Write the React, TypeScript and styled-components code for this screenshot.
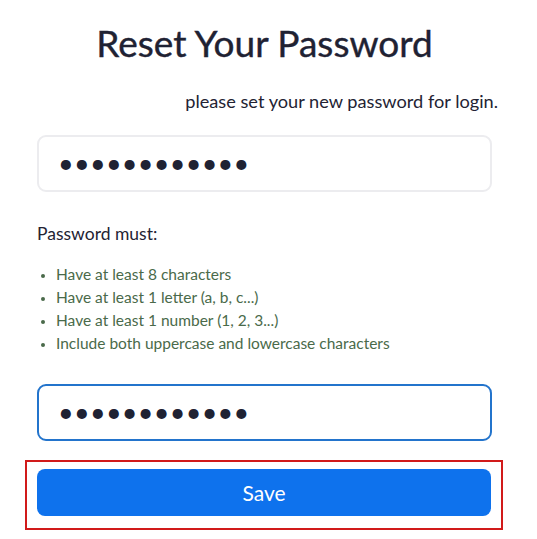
import { FC } from 'react';
import styled, { createGlobalStyle } from 'styled-components';

const GlobalStyle = createGlobalStyle`
  html, body {
    margin: 0;
    padding: 0;
    background: #fff;
  }
  body {
    font-family: Lato, "Open Sans", sans-serif;
    color: #232333;
  }
`;

const rules = [
  'Have at least 8 characters',
  'Have at least 1 letter (a, b, c...)',
  'Have at least 1 number (1, 2, 3...)',
  'Include both uppercase and lowercase characters',
];

const App: FC = () => (
  <>
    <GlobalStyle />
    <Page>
      <Title>Reset Your Password</Title>
      <Subtitle>please set your new password for login.</Subtitle>
      <PasswordInput type="password" defaultValue="newpassword1" readOnly />
      <RulesLabel>Password must:</RulesLabel>
      <RuleList>
        {rules.map((r) => (
          <Rule key={r}>{r}</Rule>
        ))}
      </RuleList>
      <PasswordInput type="password" defaultValue="newpassword1" readOnly $focused />
      <Highlight>
        <SaveButton type="button">Save</SaveButton>
      </Highlight>
    </Page>
  </>
);

export default App;

const Page = styled.main`
  width: 455px;
  margin-left: 37px;
  padding-top: 20px;
  display: flex;
  flex-direction: column;
`;

const Title = styled.h1`
  margin: 0;
  font-size: 37px;
  font-weight: 400;
  line-height: 46px;
  text-align: center;
  color: #1f2233;
  -webkit-text-stroke: 0.4px #1f2233;
`;

const Subtitle = styled.p`
  margin: 23px -6px 0 0;
  font-size: 18.2px;
  line-height: 24px;
  text-align: right;
  color: #232333;
`;

const PasswordInput = styled.input<{ $focused?: boolean }>`
  box-sizing: border-box;
  width: 100%;
  height: 57px;
  margin-top: ${(p) => (p.$focused ? '29px' : '22px')};
  padding: 0 19px 2px;
  border: ${(p) => (p.$focused ? '2px solid #2374cc' : '2px solid #ececef')};
  border-radius: 9px;
  background: #fff;
  font-family: Lato, sans-serif;
  font-size: 27px;
  letter-spacing: 0.3px;
  color: #1f2233;
  outline: none;
`;

const RulesLabel = styled.div`
  margin-top: 30px;
  font-size: 17.5px;
  line-height: 24px;
  color: #232333;
`;

const RuleList = styled.ul`
  margin: 17px 0 0;
  padding-left: 19px;
  list-style: disc;
`;

const Rule = styled.li`
  font-size: 15.5px;
  line-height: 23px;
  color: #4a6a4a;
  &::marker {
    font-size: 12px;
  }
`;

const Highlight = styled.div`
  margin: 19px -11px 0 -12px;
  padding: 7px 10px 12px 10px;
  border: 2px solid #d11a1a;
`;

const SaveButton = styled.button`
  display: block;
  width: 100%;
  height: 47px;
  border: none;
  border-radius: 8px;
  background: #0e72ed;
  color: #fff;
  font-family: Lato, sans-serif;
  font-size: 21px;
`;
